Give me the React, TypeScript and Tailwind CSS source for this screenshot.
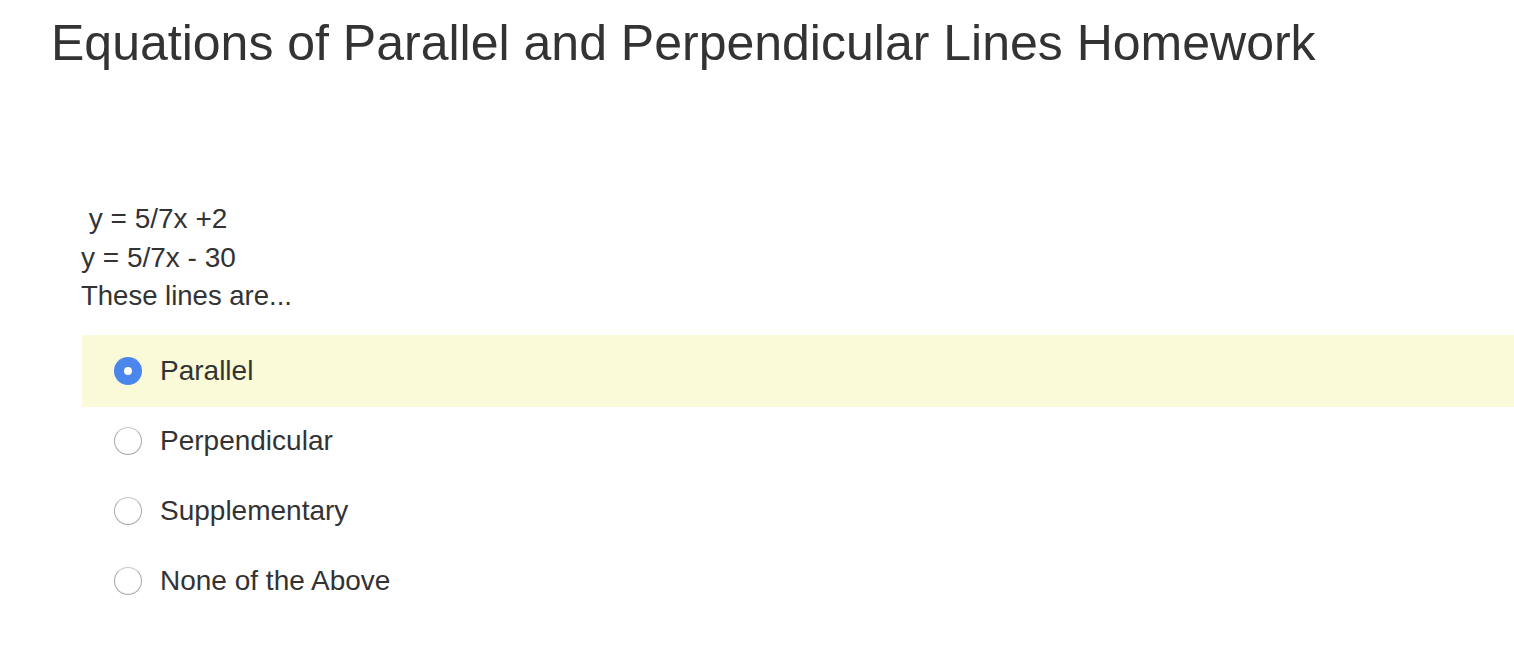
import React from 'react';

const options = ['Parallel', 'Perpendicular', 'Supplementary', 'None of the Above'];

const Radio: React.FC<{ checked: boolean }> = ({ checked }) =>
  checked ? (
    <span className="flex h-[28px] w-[28px] items-center justify-center rounded-full bg-[#4a86ec]">
      <span className="h-[8px] w-[8px] rounded-full bg-white" />
    </span>
  ) : (
    <span className="h-[28px] w-[28px] rounded-full border border-[#a9a9a9] border-t-[#c8c8c8] bg-white shadow-[inset_0_-1px_1px_rgba(0,0,0,0.06)]" />
  );

export default function App() {
  const selected = 0;

  return (
    <div className="min-h-[664px] bg-white text-[#333333] font-['Liberation_Sans',Arial,sans-serif]">
      <h1 className="pl-[51px] pt-[13px] text-[50px] leading-[60px] font-normal text-[#333333]">
        Equations of Parallel and Perpendicular Lines Homework
      </h1>

      <div className="pl-[81px] pt-[127px] text-[28px] leading-[38.5px]">
        <p>&nbsp;y = 5/7x +2</p>
        <p>y = 5/7x - 30</p>
        <p className="text-[27.5px]">These lines are...</p>
      </div>

      {/* Answer choices */}
      <div className="mt-[20px] pl-[82px]">
        {options.map((opt, i) => (
          <div
            key={opt}
            className={`flex items-center gap-[18px] pl-[32px] ${
              i === selected ? 'h-[72px] -my-px bg-[#fafad8]' : 'h-[70px]'
            }`}
          >
            <Radio checked={i === selected} />
            <span className="text-[28px] leading-none">{opt}</span>
          </div>
        ))}
      </div>
    </div>
  );
}
